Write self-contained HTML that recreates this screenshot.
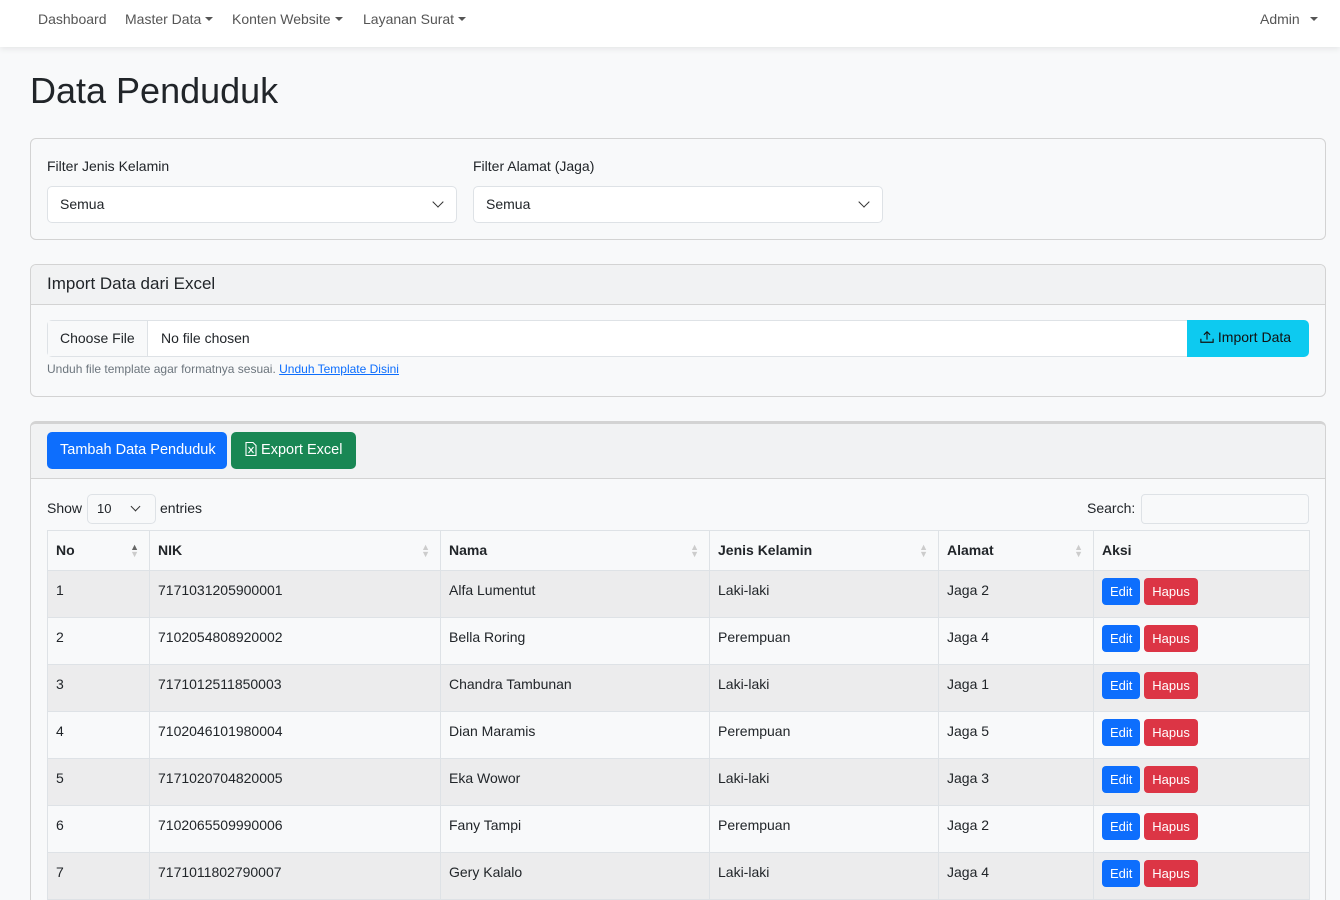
<!DOCTYPE html>
<html style="height:900px;overflow:hidden"><head><style>
*{box-sizing:border-box;margin:0;padding:0}
body{width:1340px;height:900px;overflow:hidden;background:#f8f9fa;font-family:"Liberation Sans",sans-serif;font-size:14px;color:#212529;position:relative}
.abs{position:absolute;white-space:nowrap}
.nav{left:0;top:0;width:1340px;height:47px;background:#fff;box-shadow:0 2px 6px rgba(0,0,0,.08)}
.nav span{position:absolute;top:11px;color:#555;font-size:14px}
.car{display:inline-block;width:0;height:0;border-left:4px solid transparent;border-right:4px solid transparent;border-top:4px solid #555;vertical-align:3px;margin-left:4px}
.card{border:1px solid #d3d3d3;border-radius:6px;background:#f8f9fa}
.sel{border:1px solid #dee2e6;border-radius:5px;background:#fff;padding:9px 12px}
.chev{position:absolute;right:14px;top:11px;width:8px;height:8px;border-right:1.6px solid #333;border-bottom:1.6px solid #333;transform:rotate(45deg)}
table{border-collapse:collapse;position:absolute;left:47px;top:530px;width:1263px}
td,th{border:1px solid #dee2e6;padding:0 8px;text-align:left;vertical-align:top;padding-top:11px;font-size:14px}
th{height:40px;padding-top:11px;font-weight:bold;position:relative}
td{height:47px}
tr.o td{background:#ececed}
tr.e td{background:#f8f9fa}
.b{display:inline-block;color:#fff;font-size:13px;border-radius:4px;padding:6px 8px;margin-top:-4px}
.so{position:absolute;right:10px;top:13px;font-size:9px;color:#ccc;line-height:7px}
</style></head><body>
<div class="abs nav">
<span style="left:38px">Dashboard</span>
<span style="left:125px">Master Data<i class="car"></i></span>
<span style="left:232px">Konten Website<i class="car"></i></span>
<span style="left:363px">Layanan Surat<i class="car"></i></span>
<span style="left:1260px">Admin <i class="car" style="margin-left:6px"></i></span>
</div>
<div class="abs" style="left:30px;top:70px;font-size:36px;color:#212529">Data Penduduk</div>

<div class="abs card" style="left:30px;top:138px;width:1296px;height:102px"></div>
<div class="abs" style="left:47px;top:158px">Filter Jenis Kelamin</div>
<div class="abs" style="left:473px;top:158px">Filter Alamat (Jaga)</div>
<div class="abs sel" style="left:47px;top:186px;width:410px;height:37px">Semua<i class="chev"></i></div>
<div class="abs sel" style="left:473px;top:186px;width:410px;height:37px">Semua<i class="chev"></i></div>

<div class="abs card" style="left:30px;top:264px;width:1296px;height:133px;overflow:hidden">
<div style="height:40px;background:#f1f2f3;border-bottom:1px solid #d3d3d3;padding:9px 16px;font-size:17px">Import Data dari Excel</div>
</div>
<div class="abs" style="left:47px;top:320px;width:1142px;height:37px;border:1px solid #dee2e6;border-radius:5px 0 0 5px;background:#fff">
<div style="position:absolute;left:0;top:0;width:100px;height:35px;background:#f8f9fa;border-right:1px solid #dee2e6;padding:9px 12px">Choose File</div>
<div style="position:absolute;left:113px;top:9px">No file chosen</div>
</div>
<div class="abs" style="left:1187px;top:320px;width:122px;height:37px;background:#0dcaf0;border-radius:0 5px 5px 0;padding:9px 12px 0 13px;color:#111">
<svg width="14" height="14" viewBox="0 0 16 16" style="vertical-align:-2px"><path d="M1 10v4h14v-4M8 11V2M4.5 5.5L8 2l3.5 3.5" fill="none" stroke="#111" stroke-width="1.3"/></svg> Import Data</div>
<div class="abs" style="left:47px;top:362px;font-size:12px;color:#6c757d">Unduh file template agar formatnya sesuai. <span style="color:#0d6efd;text-decoration:underline">Unduh Template Disini</span></div>

<div class="abs card" style="left:30px;top:421px;width:1296px;height:500px;border-top:3px solid #d3d3d3;overflow:hidden">
<div style="height:55px;background:#f1f2f3;border-bottom:1px solid #d3d3d3"></div>
</div>
<div class="abs" style="left:47px;top:432px;width:180px;height:37px;background:#0d6efd;border-radius:5px;color:#fff;padding:10px 13px;font-size:14.5px">Tambah Data Penduduk</div>
<div class="abs" style="left:231px;top:432px;width:125px;height:37px;background:#198754;border-radius:5px;color:#fff;padding:10px 14px;font-size:14.5px">
<svg width="12" height="14" viewBox="0 0 12 14" style="vertical-align:-2px"><path d="M1 .5h7l3 3v10H1zM3.5 5l5 6M8.5 5l-5 6" fill="none" stroke="#fff" stroke-width="1.1"/></svg> Export Excel</div>
<div class="abs" style="left:47px;top:500px">Show</div>
<div class="abs sel" style="left:87px;top:494px;width:69px;height:30px;padding:6px 9px;font-size:13px;background:#f8f9fa">10<i class="chev" style="top:8px;right:16px;width:7px;height:7px"></i></div>
<div class="abs" style="left:160px;top:500px">entries</div>
<div class="abs" style="left:1087px;top:500px">Search:</div>
<div class="abs" style="left:1141px;top:494px;width:168px;height:30px;border:1px solid #dee2e6;border-radius:4px"></div>

<table>
<colgroup><col style="width:102px"><col style="width:291px"><col style="width:269px"><col style="width:229px"><col style="width:155px"><col></colgroup>
<tr><th>No<span class="so"><span style="color:#666">▲</span><br>▼</span></th><th>NIK<span class="so">▲<br>▼</span></th><th>Nama<span class="so">▲<br>▼</span></th><th>Jenis Kelamin<span class="so">▲<br>▼</span></th><th>Alamat<span class="so">▲<br>▼</span></th><th>Aksi</th></tr>
<tr class="o"><td>1</td><td>7171031205900001</td><td>Alfa Lumentut</td><td>Laki-laki</td><td>Jaga 2</td><td><span class="b" style="background:#0d6efd">Edit</span> <span class="b" style="background:#dc3545">Hapus</span></td></tr>
<tr class="e"><td>2</td><td>7102054808920002</td><td>Bella Roring</td><td>Perempuan</td><td>Jaga 4</td><td><span class="b" style="background:#0d6efd">Edit</span> <span class="b" style="background:#dc3545">Hapus</span></td></tr>
<tr class="o"><td>3</td><td>7171012511850003</td><td>Chandra Tambunan</td><td>Laki-laki</td><td>Jaga 1</td><td><span class="b" style="background:#0d6efd">Edit</span> <span class="b" style="background:#dc3545">Hapus</span></td></tr>
<tr class="e"><td>4</td><td>7102046101980004</td><td>Dian Maramis</td><td>Perempuan</td><td>Jaga 5</td><td><span class="b" style="background:#0d6efd">Edit</span> <span class="b" style="background:#dc3545">Hapus</span></td></tr>
<tr class="o"><td>5</td><td>7171020704820005</td><td>Eka Wowor</td><td>Laki-laki</td><td>Jaga 3</td><td><span class="b" style="background:#0d6efd">Edit</span> <span class="b" style="background:#dc3545">Hapus</span></td></tr>
<tr class="e"><td>6</td><td>7102065509990006</td><td>Fany Tampi</td><td>Perempuan</td><td>Jaga 2</td><td><span class="b" style="background:#0d6efd">Edit</span> <span class="b" style="background:#dc3545">Hapus</span></td></tr>
<tr class="o"><td>7</td><td>7171011802790007</td><td>Gery Kalalo</td><td>Laki-laki</td><td>Jaga 4</td><td><span class="b" style="background:#0d6efd">Edit</span> <span class="b" style="background:#dc3545">Hapus</span></td></tr>
</table>
</body></html>
